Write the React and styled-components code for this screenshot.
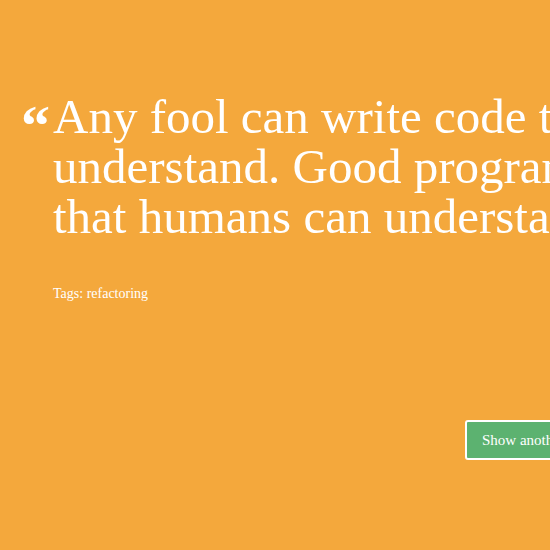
import styled, { createGlobalStyle } from "styled-components";

const Global = createGlobalStyle`
  html, body {
    margin: 0;
    padding: 0;
    background: #f4a83c;
    overflow: hidden;
  }
  #root {
    min-height: 550px;
  }
`;

export default function App() {
  return (
    <>
      <Global />
      <Page>
        <QuoteRow>
          <Marca>“</Marca>
          <Texto>
            Any fool can write code that a computer can
            <br />
            understand. Good programmers write code
            <br />
            that humans can understand.
          </Texto>
        </QuoteRow>
        <Tags>Tags: refactoring</Tags>
        <Pie>
          <Boton>Show another quote</Boton>
        </Pie>
      </Page>
    </>
  );
}

const Page = styled.div`
  width: 900px;
  height: 550px;
  background: #f4a83c;
  color: #fff;
  font-family: "Liberation Serif", "DejaVu Serif", serif;
  padding-top: 92px;
  box-sizing: border-box;
`;

const QuoteRow = styled.div`
  display: flex;
  align-items: flex-start;
  padding-left: 21px;
`;

const Marca = styled.span`
  flex: none;
  width: 32px;
  font-size: 58px;
  line-height: 58px;
  font-weight: bold;
  margin-top: 5px;
`;

const Texto = styled.div`
  font-size: 49px;
  line-height: 50px;
  white-space: nowrap;
`;

const Tags = styled.div`
  margin-top: 44px;
  padding-left: 53px;
  font-size: 14px;
`;

const Pie = styled.div`
  margin-top: 118px;
  padding-left: 465px;
`;

const Boton = styled.button`
  height: 40px;
  padding: 0 15px;
  background: #5cb270;
  border: 2px solid #fff;
  border-radius: 3px;
  color: #fff;
  font-family: "Liberation Serif", "DejaVu Serif", serif;
  font-size: 15px;
  white-space: nowrap;
`;
